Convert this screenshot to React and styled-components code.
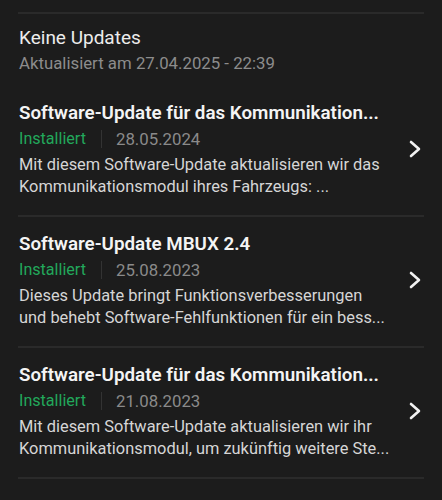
import React from "react";
import styled, { createGlobalStyle } from "styled-components";

const GlobalStyle = createGlobalStyle`
  html, body {
    margin: 0;
    padding: 0;
    background: #1c1c1c;
  }
  body {
    font-family: Roboto, "Liberation Sans", sans-serif;
    -webkit-font-smoothing: antialiased;
  }
`;

const Page = styled.div`
  padding: 12px 18px 0 18px;
  background: #1c1c1c;
  min-height: 500px;
  box-sizing: border-box;
`;

const List = styled.div`
  border-top: 2px solid #2a2a2a;
`;

const Header = styled.div`
  padding: 12px 1px 11px 1px;
`;

const HeaderTitle = styled.div`
  color: #ececec;
  font-size: 19px;
  line-height: 24px;
  font-weight: 400;
`;

const HeaderSub = styled.div`
  color: #8c8c8c;
  font-size: 16.8px;
  line-height: 24px;
  margin-top: 1px;
`;

const Row = styled.div`
  display: flex;
  align-items: center;
  gap: 18px;
  padding: 14px 3px 17px 1px;
  border-bottom: 2px solid #2a2a2a;
`;

const Content = styled.div`
  flex: 1;
  min-width: 0;
`;

const Title = styled.div`
  color: #f4f4f4;
  font-size: 18.8px;
  line-height: 26px;
  font-weight: 600;
  white-space: nowrap;
  overflow: hidden;
  text-overflow: ellipsis;
`;

const Meta = styled.div`
  display: flex;
  align-items: center;
  line-height: 26px;
`;

const Status = styled.span`
  color: #22a85b;
  font-size: 16.1px;
`;

const Sep = styled.span`
  width: 1px;
  height: 18px;
  background: #333333;
  margin: 0 14px 0 15px;
`;

const DateText = styled.span`
  color: #8a8a8a;
  font-size: 16.8px;
`;

const Desc = styled.div`
  color: #d6d6d6;
  font-size: 16.4px;
  line-height: 22px;
  margin-top: 2px;
  display: -webkit-box;
  -webkit-line-clamp: 2;
  -webkit-box-orient: vertical;
  overflow: hidden;
`;

const Chevron = styled.svg`
  flex: none;
  width: 12px;
  height: 18px;
`;

const items = [
  {
    title: "Software-Update für das Kommunikation...",
    date: "28.05.2024",
    desc: "Mit diesem Software-Update aktualisieren wir das Kommunikationsmodul ihres Fahrzeugs: ...",
  },
  {
    title: "Software-Update MBUX 2.4",
    date: "25.08.2023",
    desc: "Dieses Update bringt Funktionsverbesserungen und behebt Software-Fehlfunktionen für ein bess...",
  },
  {
    title: "Software-Update für das Kommunikation...",
    date: "21.08.2023",
    desc: "Mit diesem Software-Update aktualisieren wir ihr Kommunikationsmodul, um zukünftig weitere Ste...",
  },
];

export default function App() {
  return (
    <>
      <GlobalStyle />
      <Page>
        <List>
          <Header>
            <HeaderTitle>Keine Updates</HeaderTitle>
            <HeaderSub>Aktualisiert am 27.04.2025 - 22:39</HeaderSub>
          </Header>
          {items.map((it, i) => (
            <Row key={i}>
              <Content>
                <Title>{it.title}</Title>
                <Meta>
                  <Status>Installiert</Status>
                  <Sep />
                  <DateText>{it.date}</DateText>
                </Meta>
                <Desc>{it.desc}</Desc>
              </Content>
              <Chevron viewBox="0 0 12 18">
                <path d="M2 2 L10 9 L2 16" fill="none" stroke="#f2f2f2" strokeWidth="2.6" strokeLinecap="round" strokeLinejoin="round" />
              </Chevron>
            </Row>
          ))}
        </List>
      </Page>
    </>
  );
}
